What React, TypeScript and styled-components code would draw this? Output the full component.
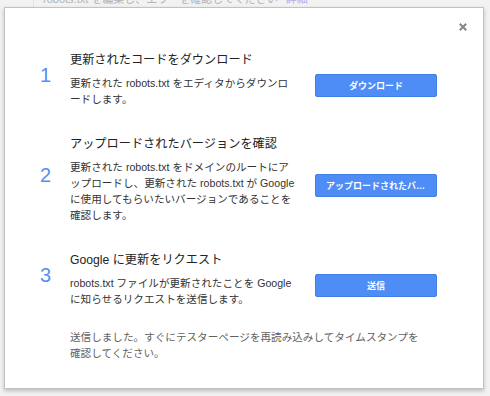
import React from "react";
import styled, { createGlobalStyle } from "styled-components";

const FONT = `"Liberation Sans", "Noto Sans CJK JP", sans-serif`;

const GlobalStyle = createGlobalStyle`
  html, body {
    margin: 0;
    padding: 0;
  }
  body {
    width: 490px;
    height: 396px;
    overflow: hidden;
    background: #f2f2f2;
    font-family: ${FONT};
  }
`;

const Backdrop = styled.div`
  position: relative;
  width: 490px;
  height: 396px;
  box-sizing: border-box;
  padding-left: 33px;
  overflow: hidden;
`;

const PageColumn = styled.div`
  height: 100%;
  border-left: 1px solid #e3e3e3;
  padding-left: 9px;
`;

const PageNotice = styled.div`
  margin-top: -8px;
  font-size: 11px;
  line-height: 14px;
  color: #b3b3b3;
  white-space: nowrap;

  span {
    margin-left: 8px;
    color: #b6aeea;
  }
`;

const Dialog = styled.div`
  position: absolute;
  left: 4px;
  top: 7px;
  width: 480px;
  height: 382px;
  box-sizing: border-box;
  padding: 21px 0 0 35px;
  background: #fff;
  border: 1px solid #c2c2c2;
  box-shadow: 0 2px 4px rgba(0, 0, 0, 0.22);
`;

const CloseButton = styled.button`
  position: absolute;
  top: 13px;
  right: 14px;
  width: 12px;
  height: 12px;
  padding: 2px;
  border: none;
  background: none;
  cursor: pointer;
  display: flex;
`;

const Step = styled.div`
  display: flex;
  align-items: center;
  height: 100px;
`;

const StepNumber = styled.div`
  width: 30px;
  flex-shrink: 0;
  margin-bottom: 8px;
  font-size: 20px;
  line-height: 24px;
  color: #5590f4;
`;

const StepBody = styled.div`
  width: 230px;
  flex-shrink: 0;
`;

const StepTitle = styled.div`
  font-size: 12.2px;
  line-height: 18px;
  color: #222;
  white-space: nowrap;
  margin-bottom: 6px;
`;

const StepText = styled.div`
  font-size: 10.6px;
  line-height: 16px;
  color: #333;
  white-space: nowrap;
`;

const ActionButton = styled.button`
  width: 122px;
  height: 23px;
  margin: 13px 0 0 15px;
  padding: 0 10px;
  box-sizing: border-box;
  flex-shrink: 0;
  background: #4d8df5;
  border: 1px solid #3f7fe6;
  border-radius: 2px;
  color: #fff;
  font-family: ${FONT};
  font-size: 9px;
  font-weight: 700;
  white-space: nowrap;
  overflow: hidden;
  text-overflow: ellipsis;
  cursor: pointer;
`;

const Notice = styled.div`
  padding-left: 30px;
  font-size: 10.6px;
  line-height: 16px;
  color: #616161;
  white-space: nowrap;
`;

const steps = [
  {
    title: "更新されたコードをダウンロード",
    text: ["更新された robots.txt をエディタからダウンロ", "ードします。"],
    action: "ダウンロード",
  },
  {
    title: "アップロードされたバージョンを確認",
    text: [
      "更新された robots.txt をドメインのルートにア",
      "ップロードし、更新された robots.txt が Google",
      "に使用してもらいたいバージョンであることを",
      "確認します。",
    ],
    action: "アップロードされたバージョンを確認",
  },
  {
    title: "Google に更新をリクエスト",
    text: ["robots.txt ファイルが更新されたことを Google", "に知らせるリクエストを送信します。"],
    action: "送信",
  },
];

export default function App() {
  return (
    <>
      <GlobalStyle />
      <Backdrop>
        <PageColumn>
          <PageNotice>
            robots.txt を編集し、エラーを確認してください<span>詳細</span>
          </PageNotice>
        </PageColumn>
        <Dialog>
          <CloseButton aria-label="閉じる">
            <svg width="8" height="8" viewBox="0 0 8 8">
              <path d="M0.8 0.8 L7.2 7.2 M7.2 0.8 L0.8 7.2" stroke="#858585" strokeWidth="2" />
            </svg>
          </CloseButton>
          {steps.map((step, i) => (
            <Step key={step.title}>
              <StepNumber>{i + 1}</StepNumber>
              <StepBody>
                <StepTitle>{step.title}</StepTitle>
                <StepText>
                  {step.text.map((line, j) => (
                    <div key={j}>{line}</div>
                  ))}
                </StepText>
              </StepBody>
              <ActionButton>{step.action}</ActionButton>
            </Step>
          ))}
          <Notice>
            送信しました。すぐにテスターページを再読み込みしてタイムスタンプを
            <br />
            確認してください。
          </Notice>
        </Dialog>
      </Backdrop>
    </>
  );
}
